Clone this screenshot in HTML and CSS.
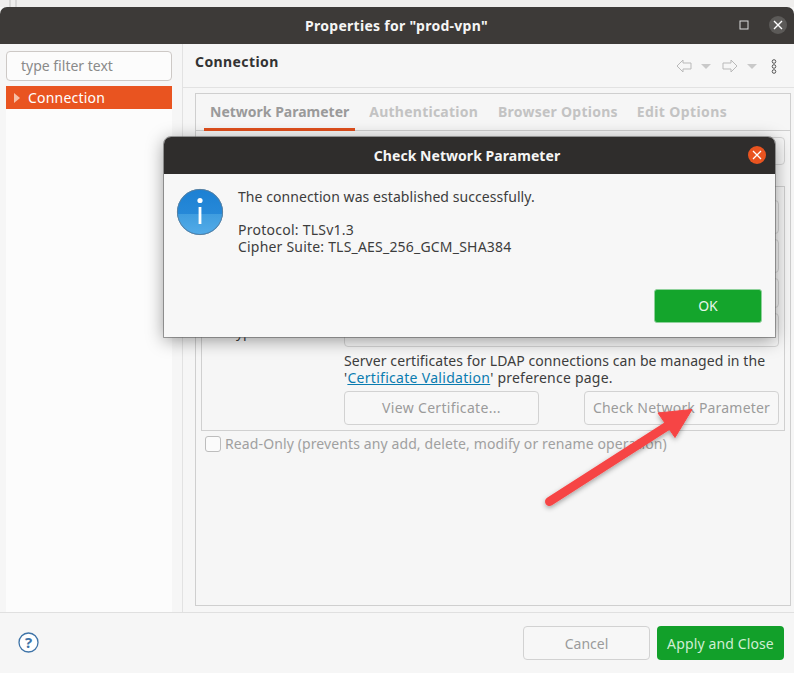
FILE: index.html
```html
<!DOCTYPE html>
<html lang="en">
<head>
<meta charset="utf-8">
<title>Properties for "prod-vpn"</title>
<link rel="stylesheet" href="styles.css">
</head>
<body>
<div class="desk"><i class="desk-line"></i><i class="desk-line"></i></div>
<div class="window">
  <header class="titlebar">
    <span class="title">Properties for "prod-vpn"</span>
    <svg class="max-icon" width="10" height="10" viewBox="0 0 10 10"><rect x="1" y="1" width="8" height="8" fill="none" stroke="#dcdcdc"/></svg>
    <span class="win-close"><svg width="10" height="10" viewBox="0 0 10 10"><path d="M1 1L9 9M9 1L1 9" stroke="#fff" stroke-width="1.4"/></svg></span>
  </header>
  <div class="main">
    <aside class="sidebar">
      <div class="filter">type filter text</div>
      <div class="tree">
        <div class="tree-item">
          <svg class="tree-arrow" width="6" height="10" viewBox="0 0 6 10"><path d="M0 0L6 5L0 10Z" fill="#f6bfa6"/></svg>
          <span>Connection</span>
        </div>
      </div>
    </aside>
    <section class="content">
      <div class="page-head">
        <h1 class="page-title">Connection</h1>
        <div class="nav">
          <svg width="16" height="14" viewBox="0 0 16 14"><path d="M1 7L7 1V4H15V10H7V13Z" fill="none" stroke="#b9b9b9"/></svg>
          <svg class="caret" width="10" height="5" viewBox="0 0 10 5"><path d="M0 0H10L5 5Z" fill="#c9c9c9"/></svg>
          <svg class="nav-next" width="16" height="14" viewBox="0 0 16 14"><path d="M15 7L9 1V4H1V10H9V13Z" fill="none" stroke="#b9b9b9"/></svg>
          <svg class="caret" width="10" height="5" viewBox="0 0 10 5"><path d="M0 0H10L5 5Z" fill="#c9c9c9"/></svg>
          <svg class="nav-menu" width="6" height="15" viewBox="0 0 6 15"><g fill="none" stroke="#555"><circle cx="3" cy="2.5" r="1.8"/><circle cx="3" cy="7.5" r="1.8"/><circle cx="3" cy="12.5" r="1.8"/></g></svg>
        </div>
      </div>
      <div class="folder">
        <nav class="tabs">
          <span class="tab tab-active">Network Parameter</span>
          <span class="tab">Authentication</span>
          <span class="tab">Browser Options</span>
          <span class="tab tab-edit">Edit Options</span>
        </nav>
        <div class="tab-body">
          <div class="top-row"><div class="box top-box"></div></div>
          <div class="group">
            <div class="field-row"><div class="box field f34"></div></div>
            <div class="field-row"><div class="box field f34"></div></div>
            <div class="field-row"><div class="box field f30"></div></div>
            <div class="field-row"><span class="label">Encryption method:</span><div class="box field f34"></div></div>
            <p class="note">Server certificates for LDAP connections can be managed in the<br><span class="note-second">'<a class="link" href="#">Certificate Validation</a>' preference page.</span></p>
            <div class="cert-row">
              <span class="btn btn-view">View Certificate...</span>
              <span class="btn btn-check">Check Network Parameter</span>
            </div>
          </div>
          <div class="check-row"><span class="checkbox"></span><span>Read-Only (prevents any add, delete, modify or rename operation)</span></div>
        </div>
      </div>
    </section>
  </div>
  <footer class="footer">
    <svg class="help" width="21" height="21" viewBox="0 0 21 21"><circle cx="10.5" cy="10.5" r="9.5" fill="#fff" stroke="#3f74a8" stroke-width="1.3"/><text x="10.5" y="15.5" text-anchor="middle" class="help-q">?</text></svg>
    <div class="footer-btns">
      <span class="btn foot-btn foot-cancel">Cancel</span>
      <span class="foot-btn apply">Apply and Close</span>
    </div>
  </footer>
</div>

<div class="dialog">
  <header class="dlg-bar">
    <span class="dlg-title">Check Network Parameter</span>
    <span class="dlg-close"><svg width="10" height="10" viewBox="0 0 10 10"><path d="M1 1L9 9M9 1L1 9" stroke="#fff" stroke-width="1.3"/></svg></span>
  </header>
  <div class="dlg-body">
    <svg class="info" width="48" height="48" viewBox="0 0 48 48">
      <defs>
        <linearGradient id="infoTop" x1="0" y1="0" x2="0" y2="1"><stop offset="0" stop-color="#1c80d3"/><stop offset="1" stop-color="#2f90dc"/></linearGradient>
        <linearGradient id="infoLow" x1="0" y1="0" x2="0" y2="1"><stop offset="0" stop-color="#3f9ddf"/><stop offset="1" stop-color="#52abe8"/></linearGradient>
      </defs>
      <circle cx="24" cy="24" r="23" fill="url(#infoTop)"/>
      <path d="M1.2 26A23 23 0 0 0 46.8 26Z" fill="url(#infoLow)"/>
      <circle cx="24" cy="24" r="22.6" fill="none" stroke="#5f7f99" stroke-width="0.9"/>
      <circle cx="24" cy="12.5" r="2.6" fill="#fff"/>
      <rect x="22.6" y="19" width="2.8" height="17" fill="#fff"/>
    </svg>
    <div class="dlg-text">
      <p class="dlg-line dlg-first">The connection was established successfully.</p>
      <p class="dlg-line dlg-gap"><span class="dlg-proto">Protocol: TLSv1.3</span><br><span class="dlg-cipher">Cipher Suite: TLS_AES_256_GCM_SHA384</span></p>
    </div>
  </div>
  <div class="dlg-foot"><span class="ok">OK</span></div>
</div>

<svg class="arrow" width="794" height="673" viewBox="0 0 794 673">
  <defs><filter id="arrowShadow" x="-20%" y="-20%" width="140%" height="150%"><feDropShadow dx="0" dy="2" stdDeviation="2.5" flood-color="#000" flood-opacity="0.35"/></filter></defs>
  <g filter="url(#arrowShadow)">
    <path d="M549.5 501.5L672 423" stroke="#f64545" stroke-width="9" stroke-linecap="round" fill="none"/>
    <path d="M692 409.5L658 413L675 437.5Z" fill="#f64545" stroke="#f64545" stroke-linejoin="round"/>
  </g>
</svg>
</body>
</html>
```
FILE: styles.css
```css
* { box-sizing: border-box; }
html, body { margin: 0; padding: 0; }
body {
  position: relative;
  width: 794px;
  height: 673px;
  overflow: hidden;
  background: #efeeed;
  font-family: "Noto Sans", sans-serif;
  font-size: 14px;
  color: #3d3d3d;
}
p { margin: 0; }

.desk { height: 7px; display: flex; gap: 4px; padding-left: 9px; }
.desk-line { width: 2px; background: #d9d8d7; }

.window { height: 666px; display: flex; flex-direction: column; background: #f6f6f6; }
.titlebar {
  position: relative;
  height: 37px;
  flex: none;
  display: flex;
  align-items: center;
  justify-content: center;
  background: #3d3a38;
  border-radius: 7px 7px 0 0;
  color: #f5f5f5;
}
.title { font-weight: 700; font-size: 14px; letter-spacing: 0.28px; margin-left: -1px; }
.max-icon { position: absolute; left: 739px; top: 13px; }
.win-close {
  position: absolute; left: 769px; top: 9px;
  width: 18px; height: 18px; border-radius: 50%;
  background: #5c5a58;
  display: flex; align-items: center; justify-content: center;
}

.main { flex: 1; display: flex; min-height: 0; }
.sidebar {
  width: 183px; flex: none;
  padding: 7px 10px 0 6px;
  border-right: 1px solid #e2e2e2;
  display: flex; flex-direction: column;
}
.filter {
  height: 30px; flex: none;
  border: 1px solid #cdc9c6; border-radius: 4px;
  background: #fcfcfc;
  padding-left: 14px;
  line-height: 27px;
  color: #8a8a8a;
  font-size: 14px;
}
.tree { flex: 1; margin-top: 5px; background: #fcfcfc; }
.tree-item {
  height: 23px;
  background: #e95420; color: #fff;
  display: flex; align-items: center;
  padding-left: 8px;
  font-size: 14px;
  letter-spacing: 0.2px;
}
.tree-arrow { margin-right: 8px; }

.content { flex: 1; min-width: 0; display: flex; flex-direction: column; padding-bottom: 6px; }
.page-head {
  height: 44px; flex: none;
  margin-bottom: 5px;
  border-bottom: 1px solid #e2e2e2;
  padding: 0 17px 0 12px;
  display: flex; justify-content: space-between; align-items: center;
}
.page-title { margin: 0 0 9px; font-size: 14px; font-weight: 700; color: #333; letter-spacing: 0.4px; }
.nav { display: flex; align-items: center; margin-top: 1px; }
.caret { margin-left: 9px; }
.nav-next { margin-left: 11px; }
.nav-menu { margin-left: 14px; }

.folder {
  flex: 1; min-height: 0;
  margin: 0 3px 0 12px;
  border: 1px solid #cfcfcf;
  display: flex; flex-direction: column;
}
.tabs {
  height: 37px; flex: none;
  display: flex; gap: 8px;
  padding-left: 8px;
  border-bottom: 1px solid #cfcfcf;
}
.tab {
  height: 37px;
  padding: 0 6px;
  line-height: 35px;
  font-weight: 700;
  font-size: 14px;
  color: #c3c3c3;
  white-space: nowrap;
  letter-spacing: 0.24px;
}
.tab-active { color: #9a9a9a; border-bottom: 3px solid #e04f1d; letter-spacing: 0; }
.tab-edit { letter-spacing: 0.4px; margin-left: -1px; }

.tab-body { padding: 6px 5px 0 5px; }
.top-row { height: 28px; margin-bottom: 21px; }
.box { border: 1px solid #d5d5d5; border-radius: 4px; background: #f7f7f7; }
.top-box { height: 28px; }
.group {
  border: 1px solid #d0d0d0;
  padding: 13px 5px 5px 0;
  display: flex; flex-direction: column; gap: 5px;
}
.field-row { position: relative; padding-left: 142px; }
.field { width: 100%; }
.f34 { height: 34px; }
.f30 { height: 30px; }
.label { position: absolute; left: 5px; top: 9px; color: #3d3d3d; white-space: nowrap; line-height: 20px; }
.note { padding-left: 142px; line-height: 17px; white-space: nowrap; letter-spacing: 0.08px; }
.note-second { letter-spacing: 0.22px; }
.link { color: #0a7cb0; letter-spacing: 0.3px; }
.cert-row { padding-left: 142px; display: flex; justify-content: space-between; }
.btn {
  height: 34px;
  border: 1px solid #d2d2d2; border-radius: 4px;
  color: #9b9b9b;
  background: #f7f7f7;
  display: flex; align-items: center; justify-content: center;
  white-space: nowrap;
  padding-bottom: 1px;
}
.btn-view { width: 195px; letter-spacing: 0.32px; }
.btn-check { width: 195px; letter-spacing: 0.2px; }
.check-row {
  display: flex; align-items: center; gap: 4px;
  margin: 4px 0 0 4px;
  height: 17px;
  color: #a0a0a0;
  white-space: nowrap;
  letter-spacing: 0.11px;
}
.checkbox {
  width: 16px; height: 16px; flex: none;
  border: 1px solid #bdbdbd; border-radius: 3px; background: #fbfbfb;
}

.footer {
  height: 61px; flex: none;
  border-top: 1px solid #e0e0e0;
  display: flex; align-items: center; justify-content: space-between;
  padding: 0 10px 0 18px;
}
.help { margin-top: -1px; }
.help-q { font: 700 15px "Noto Sans", sans-serif; fill: #3f74a8; }
.footer-btns { display: flex; gap: 7px; }
.foot-btn {
  width: 127px; height: 34px;
  border-radius: 4px;
  display: flex; align-items: center; justify-content: center;
  white-space: nowrap;
}
.foot-cancel { padding-bottom: 0; padding-top: 1px; }
.apply { background: #12a02a; color: #cfeed4; letter-spacing: 0.13px; }

.dialog {
  position: absolute; left: 164px; top: 137px;
  width: 611px; height: 200px;
  display: flex; flex-direction: column;
  background: #f7f7f7;
  border-radius: 7px 7px 0 0;
  outline: 1px solid rgba(90, 90, 90, .55);
  box-shadow: 0 3px 18px rgba(0, 0, 0, .4);
}
.dlg-bar {
  position: relative; height: 37px; flex: none;
  display: flex; align-items: center; justify-content: center;
  padding-right: 5px;
  background: #2f2d2c; border-radius: 7px 7px 0 0;
  color: #f5f5f5;
}
.dlg-title { font-weight: 700; font-size: 14px; letter-spacing: 0.05px; }
.dlg-close {
  position: absolute; left: 584px; top: 9px;
  width: 18px; height: 18px; border-radius: 50%;
  background: #e95420;
  display: flex; align-items: center; justify-content: center;
}
.dlg-body { flex: 1; display: flex; padding: 14px 0 0 12px; }
.info { flex: none; }
.dlg-text { margin-left: 14px; }
.dlg-line { line-height: 17px; }
.dlg-first { letter-spacing: 0.07px; }
.dlg-gap { margin-top: 16px; }
.dlg-proto { letter-spacing: 0.25px; }
.dlg-cipher { letter-spacing: 0.2px; }
.dlg-foot { flex: none; display: flex; justify-content: flex-end; padding: 0 13px 14px 0; }
.ok {
  width: 108px; height: 34px;
  background: #14a52c; color: #e6f6e9;
  border: 1px solid #8fd19b; border-radius: 3px;
  padding-bottom: 1px;
  display: flex; align-items: center; justify-content: center;
}

.arrow { position: absolute; left: 0; top: 0; pointer-events: none; }
```
